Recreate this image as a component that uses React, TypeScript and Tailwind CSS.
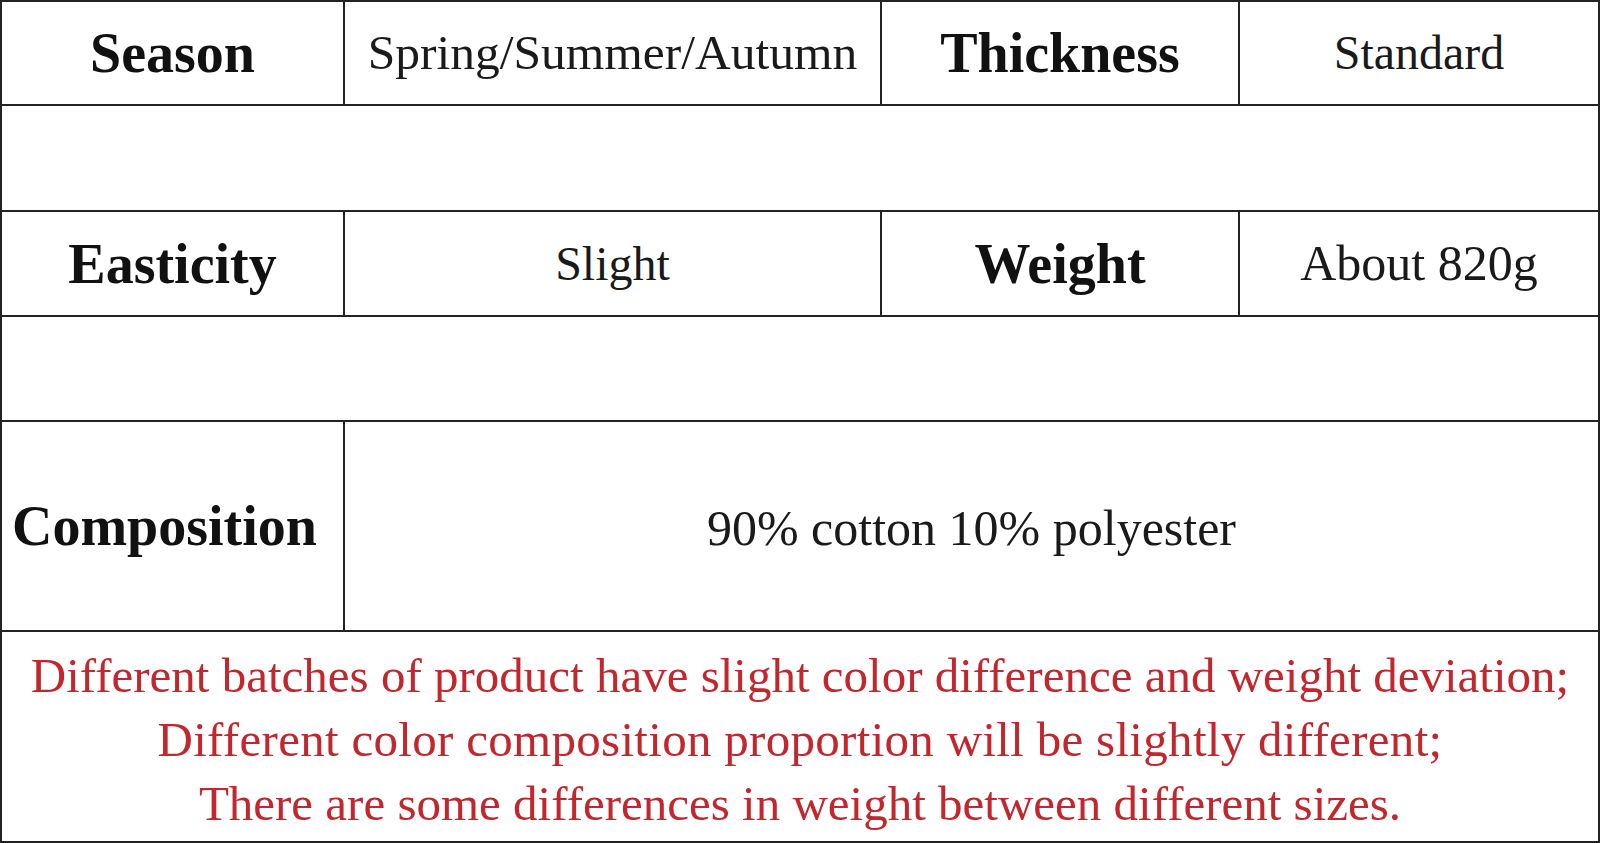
const serif = { fontFamily: '"Liberation Serif", "Times New Roman", serif' };

function Label({ children, className = 'justify-center' }: { children: React.ReactNode; className?: string }) {
  return (
    <div className={`flex items-center font-bold text-[56px] text-[#111] ${className}`}>
      {children}
    </div>
  );
}

function Value({ children, className = 'text-[49px]' }: { children: React.ReactNode; className?: string }) {
  return (
    <div className={`flex items-center justify-center text-[#1a1a1a] ${className}`}>
      {children}
    </div>
  );
}

export default function App() {
  return (
    <div
      className="w-[1600px] h-[843px] bg-white border-2 border-[#222] flex flex-col overflow-hidden"
      style={serif}
    >
      <div className="h-[104px] grid grid-cols-[343px_537px_358px_1fr] border-b-2 border-[#222] divide-x-2 divide-[#222]">
        <Label>Season</Label>
        <Value className="text-[49.5px]">Spring/Summer/Autumn</Value>
        <Label>Thickness</Label>
        <Value className="text-[48px]">Standard</Value>
      </div>
      <div className="h-[106px] border-b-2 border-[#222]" />
      <div className="h-[105px] grid grid-cols-[343px_537px_358px_1fr] border-b-2 border-[#222] divide-x-2 divide-[#222]">
        <Label>Easticity</Label>
        <Value className="text-[48px]">Slight</Value>
        <Label>Weight</Label>
        <Value className="text-[50px]">About 820g</Value>
      </div>
      <div className="h-[105px] border-b-2 border-[#222]" />
      <div className="h-[210px] grid grid-cols-[343px_1fr] border-b-2 border-[#222] divide-x-2 divide-[#222]">
        <Label className="justify-start pl-[10px]">Composition</Label>
        <Value className="text-[50px] pt-[4px]">90% cotton 10% polyester</Value>
      </div>
      <div className="flex-1 flex flex-col items-center justify-center text-[49px] leading-[64px] text-[#c1272d] pt-[6px]">
        <p>Different batches of product have slight color difference and weight deviation;</p>
        <p className="tracking-[0.3px]">Different color composition proportion will be slightly different;</p>
        <p>There are some differences in weight between different sizes.</p>
      </div>
    </div>
  );
}
